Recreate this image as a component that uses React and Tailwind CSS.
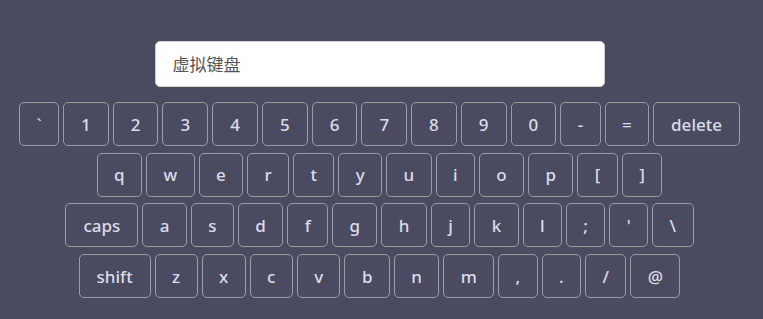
import React, { useState } from 'react';

const rows = [
  ['`', '1', '2', '3', '4', '5', '6', '7', '8', '9', '0', '-', '=', 'delete'],
  ['q', 'w', 'e', 'r', 't', 'y', 'u', 'i', 'o', 'p', '[', ']'],
  ['caps', 'a', 's', 'd', 'f', 'g', 'h', 'j', 'k', 'l', ';', "'", '\\'],
  ['shift', 'z', 'x', 'c', 'v', 'b', 'n', 'm', ',', '.', '/', '@'],
];

export default function App() {
  const [text, setText] = useState('');
  const [caps, setCaps] = useState(false);

  const press = (key) => {
    if (key === 'delete') return setText(text.slice(0, -1));
    if (key === 'caps' || key === 'shift') return setCaps(!caps);
    setText(text + (caps ? key.toUpperCase() : key));
  };

  return (
    <div className="min-h-screen bg-[#4a4b60] pt-[41px] pr-1 font-['Noto_Sans','Noto_Sans_CJK_SC',sans-serif]">
      <input
        value={text}
        onChange={(e) => setText(e.target.value)}
        placeholder="虚拟键盘"
        className="block mx-auto w-[450px] h-[46px] rounded-[5px] border border-[#cfcfcf] bg-white px-[17px] text-[17px] text-[#444] placeholder:text-[#555] outline-none"
      />
      <div className="mt-[15px] flex flex-col gap-[6.7px]">
        {rows.map((row, i) => (
          <div key={i} className="flex justify-center gap-1">
            {row.map((key) => (
              <button
                key={key}
                onClick={() => press(key)}
                className={`h-[44px] rounded-[5px] border border-[#9c9ca4] text-[17px] font-medium leading-none text-[#dcdcea] hover:bg-[#55566c] ${
                  key.length === 1 && !/[0-9]/.test(key) ? 'px-[16.4px]' : 'px-[17px]'
                }`}
              >
                {key}
              </button>
            ))}
          </div>
        ))}
      </div>
    </div>
  );
}
